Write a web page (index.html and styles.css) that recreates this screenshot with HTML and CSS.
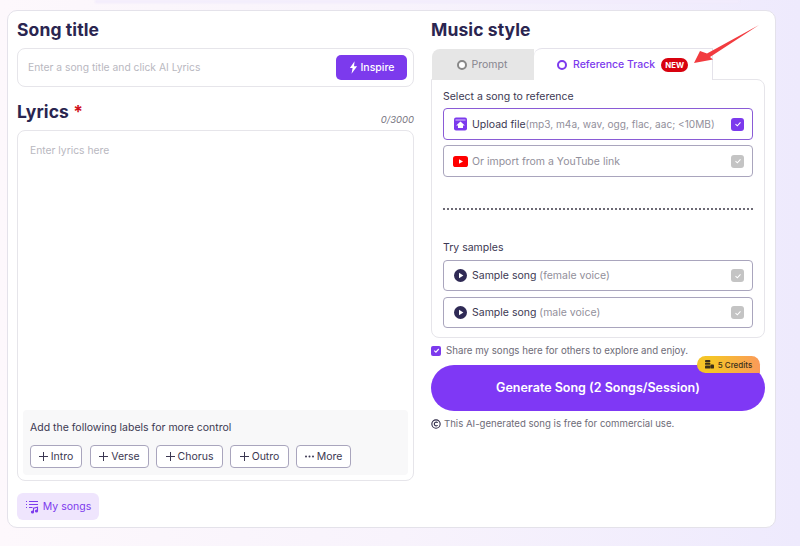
FILE: index.html
```html
<!DOCTYPE html>
<html lang="en">
<head>
<meta charset="utf-8">
<title>Song creator</title>
<link rel="stylesheet" href="styles.css">
</head>
<body>
<div class="topglow"></div>
<main class="card">
  <section class="left">
    <h2 class="title">Song title</h2>
    <div class="title-input">
      <span class="ph">Enter a song title and click AI Lyrics</span>
      <button class="inspire">
        <svg class="bolt" viewBox="0 0 10 14" width="9" height="13"><path d="M6.200 0 1 7.600h3L2.800 14 9 5.600H5.600z" fill="#fff"/></svg>
        Inspire
      </button>
    </div>
    <div class="lyrics-head">
      <h2 class="title">Lyrics <span class="star">*</span></h2>
      <span class="count">0/3000</span>
    </div>
    <div class="lyrics">
      <span class="ph lyrics-ph">Enter lyrics here</span>
      <div class="labels">
        <p class="labels-text">Add the following labels for more control</p>
        <div class="chips">
          <button class="chip chip-intro"><svg class="plus" viewBox="0 0 9 9" width="9" height="9"><path d="M4.500 0v9M0 4.500h9" stroke="#3c3852" stroke-width="1"/></svg>Intro</button>
          <button class="chip chip-verse"><svg class="plus" viewBox="0 0 9 9" width="9" height="9"><path d="M4.500 0v9M0 4.500h9" stroke="#3c3852" stroke-width="1"/></svg>Verse</button>
          <button class="chip chip-chorus"><svg class="plus" viewBox="0 0 9 9" width="9" height="9"><path d="M4.500 0v9M0 4.500h9" stroke="#3c3852" stroke-width="1"/></svg>Chorus</button>
          <button class="chip chip-outro"><svg class="plus" viewBox="0 0 9 9" width="9" height="9"><path d="M4.500 0v9M0 4.500h9" stroke="#3c3852" stroke-width="1"/></svg>Outro</button>
          <button class="chip chip-more"><svg class="plus" viewBox="0 0 9 3" width="9" height="3"><circle cx="1" cy="1.500" r="1" fill="#3c3852"/><circle cx="4.500" cy="1.500" r="1" fill="#3c3852"/><circle cx="8" cy="1.500" r="1" fill="#3c3852"/></svg>More</button>
        </div>
      </div>
    </div>
    <button class="mysongs">
      <svg viewBox="0 0 14 14" width="14" height="14" fill="none" stroke="#7c3aed" stroke-width="1.100">
        <path d="M1 1.500h1M1 4.500h1M1 7.500h1M4 1.500h9M4 4.500h9M4 7.500h3.500"/>
        <path d="M8.500 12V8.200l4-.9V11"/>
        <circle cx="7.500" cy="12" r="1" fill="#7c3aed"/>
        <circle cx="11.500" cy="11" r="1" fill="#7c3aed"/>
      </svg>
      My songs
    </button>
  </section>

  <section class="right">
    <h2 class="title">Music style</h2>
    <div class="tabs">
      <div class="tab tab-off"><span class="radio radio-off"></span>Prompt</div>
      <div class="tab tab-on"><span class="radio radio-on"></span>Reference Track<span class="new">NEW</span></div>
    </div>
    <div class="panel">
      <p class="panel-label">Select a song to reference</p>
      <div class="opt opt-active">
        <svg class="opt-icon icon-wide" viewBox="0 0 14 14" width="14" height="14"><rect width="13" height="13" y="0.500" rx="2" fill="#7c3aed"/><path d="M1.500 3h10" stroke="#d9c7fb" stroke-width="1"/><path d="M6.500 4.500 10.800 8.400H9v2.600H4V8.400H2.200z" fill="#fff"/></svg>
        <span class="opt-main">Upload file</span><span class="opt-sub opt-sub-small">(mp3, m4a, wav, ogg, flac, aac; &lt;10MB)</span>
        <span class="check check-on"><svg viewBox="0 0 12 12" width="10" height="10"><path d="M3 6.200 5.200 8.200 9 4" fill="none" stroke="#fff" stroke-width="1.300"/></svg></span>
      </div>
      <div class="opt">
        <svg class="opt-icon icon-wide yt" viewBox="0 0 15 11" width="15" height="11"><rect width="15" height="11" rx="2.600" fill="#f00"/><path d="M6 3.200 10 5.500 6 7.800z" fill="#fff"/></svg>
        <span class="opt-sub">Or import from a YouTube link</span>
        <span class="check"><svg viewBox="0 0 12 12" width="10" height="10"><path d="M3 6.200 5.200 8.200 9 4" fill="none" stroke="#fff" stroke-width="1.300"/></svg></span>
      </div>
      <div class="divider"></div>
      <p class="panel-label samples-label">Try samples</p>
      <div class="opt opt-sample">
        <svg class="opt-icon" viewBox="0 0 13 13" width="13" height="13"><circle cx="6.500" cy="6.500" r="6.500" fill="#2f2a55"/><path d="M5 3.700 9.400 6.500 5 9.300z" fill="#fff"/></svg>
        <span class="opt-main">Sample song</span>&nbsp;<span class="opt-sub">(female voice)</span>
        <span class="check"><svg viewBox="0 0 12 12" width="10" height="10"><path d="M3 6.200 5.200 8.200 9 4" fill="none" stroke="#fff" stroke-width="1.300"/></svg></span>
      </div>
      <div class="opt opt-sample">
        <svg class="opt-icon" viewBox="0 0 13 13" width="13" height="13"><circle cx="6.500" cy="6.500" r="6.500" fill="#2f2a55"/><path d="M5 3.700 9.400 6.500 5 9.300z" fill="#fff"/></svg>
        <span class="opt-main">Sample song</span>&nbsp;<span class="opt-sub">(male voice)</span>
        <span class="check"><svg viewBox="0 0 12 12" width="10" height="10"><path d="M3 6.200 5.200 8.200 9 4" fill="none" stroke="#fff" stroke-width="1.300"/></svg></span>
      </div>
    </div>
    <label class="share">
      <span class="share-box"><svg viewBox="0 0 12 12" width="9" height="9"><path d="M3 6.200 5.200 8.200 9 4" fill="none" stroke="#fff" stroke-width="1.500"/></svg></span>
      Share my songs here for others to explore and enjoy.
    </label>
    <div class="generate-wrap">
      <button class="generate">Generate Song (2 Songs/Session)</button>
      <span class="credits">
        <svg viewBox="0 0 10 10" width="9" height="9" fill="#3a2f1a"><rect x="0" y="0" width="6" height="2.400" rx="1"/><rect x="0" y="3" width="6" height="2.400" rx="1"/><rect x="0" y="6" width="6" height="3.500" rx="1"/><rect x="6" y="5" width="4" height="4.500" rx="1"/></svg>
        5 Credits
      </span>
    </div>
    <p class="license">
      <svg viewBox="0 0 12 12" width="10" height="10" fill="none" stroke="#2b2745" stroke-width="1.300"><circle cx="6" cy="6" r="5"/><path d="M8 4.500a2.300 2.300 0 1 0 0 3"/></svg>
      This AI-generated song is free for commercial use.
    </p>
  </section>
  <svg class="arrow" viewBox="0 0 72 46" width="72" height="46"><path d="M69 5 17 33.500 10 31 4 43 23 39.500 20 37z" fill="#f23b3f"/></svg>
</main>
</body>
</html>
```
FILE: styles.css
```css
* { box-sizing: border-box; }
html, body { margin: 0; height: 100%; }
body {
  width: 800px;
  height: 546px;
  overflow: hidden;
  padding: 10px 24px 0 7px;
  font-family: Inter, "Open Sans", sans-serif;
  color: #2b2745;
  background: linear-gradient(90deg, #fdf8fc 0%, #f8f3fc 50%, #eeeafd 100%);
  position: relative;
}
button { font-family: inherit; cursor: pointer; }
p, h2 { margin: 0; }
.topglow {
  position: absolute;
  left: 95px; right: 60px; top: 0;
  height: 3px;
  background: #f1ebfc;
  filter: blur(1px);
}
.card {
  position: relative;
  width: 769px;
  height: 518px;
  background: #fff;
  border: 1px solid #e4e2ea;
  border-radius: 10px;
  padding: 5px 10px 6px 9px;
  display: flex;
  gap: 17px;
}
.left { width: 397px; display: flex; flex-direction: column; }
.right { width: 334px; display: flex; flex-direction: column; }
.title {
  font-size: 17.500px;
  line-height: 27px;
  font-weight: 700;
  color: #2a2550;
  letter-spacing: 0.100px;
}
.star { color: #d0101b; }
.ph { font-size: 10.300px; color: #b9b8bf; }
.title-input {
  height: 39px;
  margin-top: 5px;
  border: 1px solid #e6e5ea;
  border-radius: 8px;
  padding: 0 6px 0 10px;
  display: flex;
  align-items: center;
  justify-content: space-between;
}
.title-input .ph { margin-bottom: 2px; }
.inspire {
  width: 71px;
  height: 25px;
  background: #7c3aed;
  color: #fff;
  border: 0;
  border-radius: 5px;
  font-size: 10.500px;
  font-weight: 500;
  display: flex;
  align-items: center;
  justify-content: center;
  gap: 3px;
  padding: 0;
}
.lyrics-head {
  display: flex;
  justify-content: space-between;
  align-items: flex-end;
  margin-top: 11px;
  height: 28px;
}
.lyrics-head .title { align-self: flex-start; }
.count { font-size: 9.500px; line-height: 12px; font-style: italic; color: #77757f; }
.lyrics {
  margin-top: 4px;
  height: 351px;
  border: 1px solid #e6e5ea;
  border-radius: 8px;
  padding: 13px 5px 5px;
  display: flex;
  flex-direction: column;
  justify-content: space-between;
}
.lyrics-ph { padding-left: 7px; }
.labels {
  height: 65px;
  background: #f8f8f9;
  border-radius: 4px;
  padding: 11px 7px 0;
}
.labels-text { font-size: 10.500px; line-height: 14px; color: #3c3852; }
.chips { display: flex; margin-top: 10px; }
.chip {
  height: 23px;
  padding: 0;
  background: #fff;
  border: 1px solid #a9a5bd;
  border-radius: 4px;
  font-size: 10.500px;
  color: #3c3852;
  display: flex;
  align-items: center;
  justify-content: center;
  gap: 3px;
}
.plus { flex: none; }
.chip-intro { width: 52px; margin-right: 8px; }
.chip-verse { width: 59px; margin-right: 7px; }
.chip-chorus { width: 67px; margin-right: 7px; }
.chip-outro { width: 59px; margin-right: 7px; }
.chip-more { width: 55px; }
.mysongs {
  margin-top: 12px;
  width: 82px;
  height: 27px;
  background: #efe5fd;
  border: 0;
  border-radius: 6px;
  color: #7c3aed;
  font-size: 10.500px;
  display: flex;
  align-items: center;
  justify-content: center;
  gap: 4px;
  padding: 0;
}
.tabs { display: flex; margin-top: 5px; height: 32px; position: relative; z-index: 1; margin-bottom: -1px; }
.tab {
  font-size: 10.500px;
  display: flex;
  align-items: center;
  justify-content: center;
  gap: 5px;
}
.tab-off {
  width: 102px;
  margin-left: 1px;
  margin-top: 1px;
  background: #e6e6e6;
  color: #87858e;
  border-radius: 8px 0 0 0;
  padding-right: 2px;
}
.tab-on {
  width: 179px;
  background: #fff;
  color: #7c3aed;
  font-weight: 500;
  border: 1px solid #e4e2ea;
  border-width: 1px 1px 0 0;
  border-radius: 8px 0 0 0;
  gap: 6px;
  padding-right: 1px;
}
.radio {
  width: 10px; height: 10px;
  border-radius: 50%;
  border: 2.500px solid #888;
  background: #fff;
}
.radio-on { border-color: #7c3aed; }
.new {
  background: #d8020f;
  color: #fff;
  font-size: 7.800px;
  font-weight: 700;
  border-radius: 7px;
  padding: 0 4px;
  line-height: 14px;
}
.panel {
  height: 259px;
  border: 1px solid #e6e5ea;
  border-radius: 0 8px 8px 8px;
  padding: 10px 11px 0;
}
.panel-label { font-size: 10.500px; line-height: 14px; color: #3c3852; }
.opt {
  height: 32px;
  margin-top: 4px;
  border: 1px solid #a9a5bd;
  border-radius: 4px;
  padding: 0 8px 0 10px;
  font-size: 10.500px;
  display: flex;
  align-items: center;
}
.opt + .opt { margin-top: 5px; }
.opt-active { border-color: #8a5bd6; }
.opt-icon { margin-right: 5px; flex: none; }
.icon-wide { margin-right: 4px; }
.yt { margin-left: -1px; }
.opt-main { color: #3c3852; white-space: pre; }
.opt-sub { color: #928f9b; white-space: pre; }
.opt-sub-small { font-size: 10.100px; }
.check {
  margin-left: auto;
  width: 13px; height: 13px;
  background: #c4c4c4;
  border-radius: 3px;
  display: flex;
  align-items: center;
  justify-content: center;
  flex: none;
}
.check-on { background: #7c3aed; }
.divider {
  margin-top: 31px;
  border-top: 2px dotted #6d6a75;
}
.samples-label { margin-top: 31px; }
.opt-sample { height: 31px; margin-top: 5px; }
.opt-sample + .opt-sample { margin-top: 6px; }
.share {
  margin-top: 6px;
  font-size: 9.700px;
  line-height: 13px;
  color: #6e6c78;
  display: flex;
  align-items: center;
  gap: 5px;
}
.share-box {
  width: 10px; height: 10px;
  background: #7c3aed;
  border-radius: 2px;
  display: flex;
  align-items: center;
  justify-content: center;
}
.generate-wrap { position: relative; margin-top: 8px; }
.generate {
  display: block;
  width: 334px;
  height: 46px;
  border: 0;
  border-radius: 23px;
  background: #7f38f5;
  color: #fff;
  font-size: 12.500px;
  font-weight: 600;
  padding: 0 0 2px;
}
.credits {
  position: absolute;
  right: 5px;
  top: -9px;
  width: 63px;
  height: 17px;
  border-radius: 9px 9px 0 9px;
  background: linear-gradient(90deg, #f5c428 25%, #fb9a5a 100%);
  color: #3a2f1a;
  font-size: 8px;
  font-weight: 500;
  display: flex;
  align-items: center;
  justify-content: center;
  gap: 4px;
}
.license {
  margin-top: 6px;
  font-size: 9.600px;
  line-height: 13px;
  color: #6e6c78;
  display: flex;
  align-items: center;
  gap: 3px;
}
.arrow { position: absolute; left: 682px; top: 9px; z-index: 2; }
```
